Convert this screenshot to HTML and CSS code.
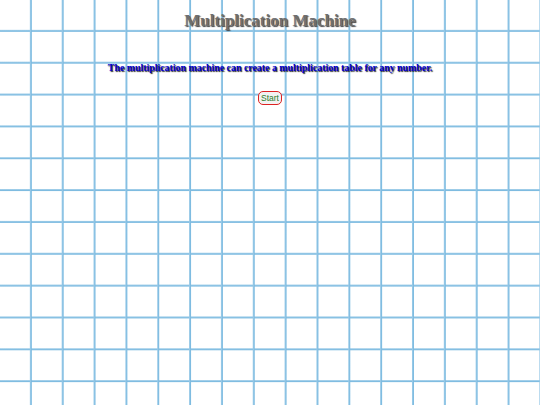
FILE: index.html
```html
<!DOCTYPE html>
<html lang="en">
<head>
<meta charset="utf-8">
<title>Multiplication Machine</title>
<link rel="stylesheet" href="styles.css">
</head>
<body>
<main class="machine">
  <h1 class="machine-title">Multiplication Machine</h1>
  <p class="machine-intro">The multiplication machine can create a multiplication table for any number.</p>
  <button class="start-btn" type="button">Start</button>
</main>
</body>
</html>
```
FILE: styles.css
```css
html, body {
  margin: 0;
  padding: 0;
  height: 100%;
}

/* graph-paper background */
body {
  background-color: #ffffff;
  background-image:
    linear-gradient(to right, transparent 30px, #b4d8ee 30px, #5fabd9 31px, #b4d8ee 32px, transparent 32px),
    linear-gradient(to bottom, transparent 30px, #b4d8ee 30px, #5fabd9 31px, #b4d8ee 32px, transparent 32px);
  background-size: 31.85px 31.85px;
  background-position: 0 0;
  font-family: "Liberation Serif", "Times New Roman", serif;
}

.machine {
  display: flex;
  flex-direction: column;
  align-items: center;
  padding-top: 11px;
}

.machine-title {
  margin: 0;
  font-size: 17px;
  font-weight: bold;
  color: #6f6f6f;
  text-shadow: 1px 1px 1px #444;
}

.machine-intro {
  margin: 31px 0 0;
  font-size: 9.9px;
  font-weight: bold;
  color: #0000cc;
  text-shadow: 1px 1px 1px #222;
}

.start-btn {
  margin-top: 18px;
  padding: 1px 2px;
  font-family: "Liberation Sans", Arial, sans-serif;
  font-size: 8.5px;
  line-height: 10px;
  color: #2a7d2a;
  background: #f2f2f2;
  border: 1px solid #d22;
  border-radius: 5px;
}
```
